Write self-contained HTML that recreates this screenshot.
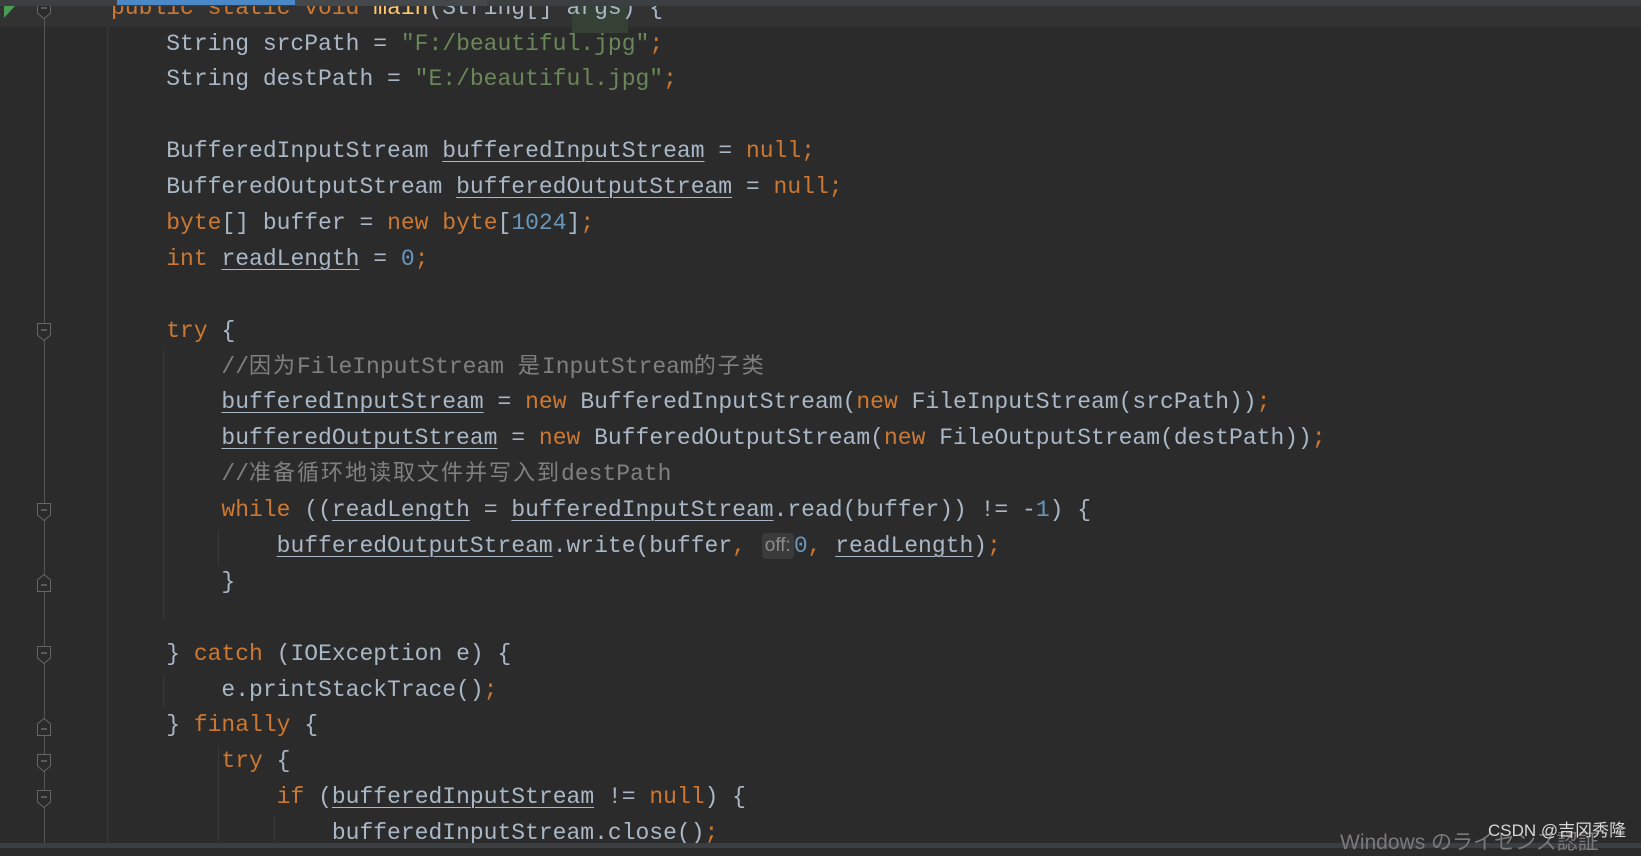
<!DOCTYPE html>
<html><head><meta charset="utf-8"><style>
html,body{margin:0;padding:0;}
body{width:1641px;height:848px;background:#2b2b2b;overflow:hidden;position:relative;}
.code{position:absolute;left:111px;top:-9.4px;font-family:"Liberation Mono","Noto Sans CJK SC",monospace;font-size:23px;color:#a9b7c6;}
.l{height:35.9px;line-height:35.9px;white-space:pre;overflow:visible;}
.k{color:#cc7832;}
.s{color:#6a8759;}
.n{color:#6897bb;}
.c{color:#808080;}
.m{color:#ffc66d;}
.f{text-decoration:underline;text-decoration-color:#a9b7c6;text-underline-offset:4px;text-decoration-thickness:1px;}
.cj{font-family:"Noto Sans CJK SC",sans-serif;letter-spacing:2px;font-size:22px;line-height:1;}
.hint{display:inline-block;background:#3b3b3b;color:#8c8c8c;font-family:"Liberation Sans",sans-serif;font-size:19px;border-radius:4px;padding:0 3px;line-height:26px;margin-left:2px;vertical-align:1px;}
.g{position:absolute;width:1px;background:#393939;}
.fold{position:absolute;left:36px;width:16px;height:18px;}
</style></head><body>
<div style="position:absolute;left:0;top:0;width:1641px;height:27px;background:#323232"></div>
<div style="position:absolute;left:572px;top:6px;width:56px;height:27px;background:#344134"></div>
<div class="g" style="left:107px;top:27px;height:821px"></div>
<div class="g" style="left:163px;top:350px;height:270px"></div>
<div class="g" style="left:163px;top:675px;height:33px"></div>
<div class="g" style="left:218px;top:530px;height:36px"></div>
<div class="g" style="left:218px;top:745px;height:103px"></div>
<div class="g" style="left:274px;top:815px;height:33px"></div>
<div style="position:absolute;left:44px;top:0;width:1px;height:848px;background:#555"></div>
<svg style="position:absolute;left:4px;top:6px" width="12" height="13"><polygon points="0,0 11,0 0,12" fill="#499c54"/></svg>
<div class="code"><div class="l"><span class="k">public static void </span><span class="m">main</span>(String[] args) {</div><div class="l">    String srcPath = <span class="s">"F:/beautiful.jpg"</span><span class="k">;</span></div><div class="l">    String destPath = <span class="s">"E:/beautiful.jpg"</span><span class="k">;</span></div><div class="l"> </div><div class="l">    BufferedInputStream <span class="f">bufferedInputStream</span> = <span class="k">null;</span></div><div class="l">    BufferedOutputStream <span class="f">bufferedOutputStream</span> = <span class="k">null;</span></div><div class="l">    <span class="k">byte</span>[] buffer = <span class="k">new byte</span>[<span class="n">1024</span>]<span class="k">;</span></div><div class="l">    <span class="k">int </span><span class="f">readLength</span> = <span class="n">0</span><span class="k">;</span></div><div class="l"> </div><div class="l">    <span class="k">try</span> {</div><div class="l">        <span class="c">//<span class="cj">因为</span>FileInputStream <span class="cj">是</span>InputStream<span class="cj">的子类</span></span></div><div class="l">        <span class="f">bufferedInputStream</span> = <span class="k">new </span>BufferedInputStream(<span class="k">new </span>FileInputStream(srcPath))<span class="k">;</span></div><div class="l">        <span class="f">bufferedOutputStream</span> = <span class="k">new </span>BufferedOutputStream(<span class="k">new </span>FileOutputStream(destPath))<span class="k">;</span></div><div class="l">        <span class="c">//<span class="cj">准备循环地读取文件并写入到</span>destPath</span></div><div class="l">        <span class="k">while </span>((<span class="f">readLength</span> = <span class="f">bufferedInputStream</span>.read(buffer)) != -<span class="n">1</span>) {</div><div class="l">            <span class="f">bufferedOutputStream</span>.write(buffer<span class="k">,</span> <span class="hint">off:</span><span class="n">0</span><span class="k">, </span><span class="f">readLength</span>)<span class="k">;</span></div><div class="l">        }</div><div class="l"> </div><div class="l">    } <span class="k">catch </span>(IOException e) {</div><div class="l">        e.printStackTrace()<span class="k">;</span></div><div class="l">    } <span class="k">finally </span>{</div><div class="l">        <span class="k">try </span>{</div><div class="l">            <span class="k">if </span>(<span class="f">bufferedInputStream</span> != <span class="k">null</span>) {</div><div class="l">                <span class="f">bufferedInputStream</span>.close()<span class="k">;</span></div></div>
<svg class="fold" style="top:1px" viewBox="0 0 16 18"><path d="M1.5 0.5H14.5V12L8 17.5L1.5 12Z" fill="#2b2b2b" stroke="#666"/><path d="M5 7H11" stroke="#888"/></svg>
<svg class="fold" style="top:323px" viewBox="0 0 16 18"><path d="M1.5 0.5H14.5V12L8 17.5L1.5 12Z" fill="#2b2b2b" stroke="#666"/><path d="M5 7H11" stroke="#888"/></svg>
<svg class="fold" style="top:503px" viewBox="0 0 16 18"><path d="M1.5 0.5H14.5V12L8 17.5L1.5 12Z" fill="#2b2b2b" stroke="#666"/><path d="M5 7H11" stroke="#888"/></svg>
<svg class="fold" style="top:574px" viewBox="0 0 16 18"><path d="M1.5 17.5H14.5V6L8 0.5L1.5 6Z" fill="#2b2b2b" stroke="#666"/><path d="M5 11H11" stroke="#888"/></svg>
<svg class="fold" style="top:646px" viewBox="0 0 16 18"><path d="M1.5 0.5H14.5V12L8 17.5L1.5 12Z" fill="#2b2b2b" stroke="#666"/><path d="M5 7H11" stroke="#888"/></svg>
<svg class="fold" style="top:718px" viewBox="0 0 16 18"><path d="M1.5 17.5H14.5V6L8 0.5L1.5 6Z" fill="#2b2b2b" stroke="#666"/><path d="M5 11H11" stroke="#888"/></svg>
<svg class="fold" style="top:754px" viewBox="0 0 16 18"><path d="M1.5 0.5H14.5V12L8 17.5L1.5 12Z" fill="#2b2b2b" stroke="#666"/><path d="M5 7H11" stroke="#888"/></svg>
<svg class="fold" style="top:790px" viewBox="0 0 16 18"><path d="M1.5 0.5H14.5V12L8 17.5L1.5 12Z" fill="#2b2b2b" stroke="#666"/><path d="M5 7H11" stroke="#888"/></svg>
<div style="position:absolute;left:0;top:0;width:1641px;height:6px;background:#3c3f41"></div>
<div style="position:absolute;left:295px;top:0;width:192px;height:6px;background:#45484a"></div>
<div style="position:absolute;left:117px;top:0;width:178px;height:5px;background:#4a88c7"></div>
<div style="position:absolute;left:0;top:843px;width:1641px;height:5px;background:#3c3f41"></div>
<div style="position:absolute;left:1340px;top:826px;font-family:'Liberation Sans','Noto Sans CJK JP',sans-serif;font-size:21px;color:#7a7a7a;white-space:nowrap">Windows のライセンス認証</div>
<div style="position:absolute;left:1488px;top:816px;font-family:'Liberation Sans','Noto Sans CJK SC',sans-serif;font-size:17px;color:#d8d8d8;white-space:nowrap">CSDN @吉冈秀隆</div>
</body></html>
